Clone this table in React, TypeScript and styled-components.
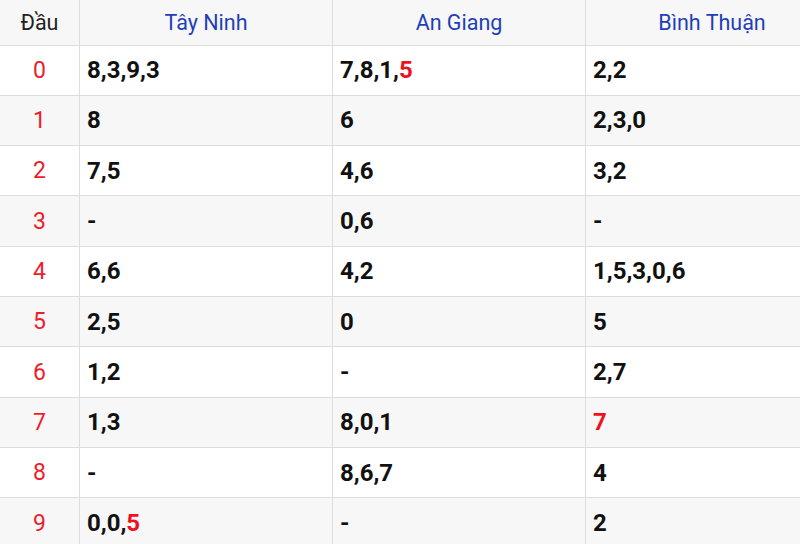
import React from "react";
import styled, { createGlobalStyle } from "styled-components";

const GlobalStyle = createGlobalStyle`
  html, body {
    margin: 0;
    padding: 0;
    background: #fff;
    overflow: hidden;
  }
  body {
    font-family: Roboto, "Noto Sans", Arial, sans-serif;
  }
`;

const Frame = styled.div`
  width: 800px;
  height: 544px;
  overflow: hidden;
`;

const Table = styled.div`
  display: grid;
  grid-template-columns: 80px repeat(3, 253px);
  grid-template-rows: 45.5px repeat(10, 50.33px);
  width: 839px;
`;

const Cell = styled.div<{ $shade?: boolean; $center?: boolean }>`
  box-sizing: border-box;
  display: flex;
  align-items: center;
  justify-content: ${(p) => (p.$center ? "center" : "flex-start")};
  padding: 0 7px;
  border-right: 1px solid #dddddd;
  border-bottom: 1px solid #dddddd;
  background: ${(p) => (p.$shade ? "#f7f7f7" : "#ffffff")};
`;

const HeadLabel = styled.span<{ $blue?: boolean }>`
  color: ${(p) => (p.$blue ? "#1f3fb8" : "#222222")};
  font-size: 21.5px;
  font-weight: 400;
`;

const Head = styled.span`
  color: #ee1d2b;
  font-size: 23px;
  font-weight: 400;
`;

const Nums = styled.span`
  color: #111111;
  font-size: 24px;
  font-weight: 700;
`;

const Hot = styled.span`
  color: #ee1120;
`;

type Val = { text: string; hot?: string };

const provinces = ["Tây Ninh", "An Giang", "Bình Thuận"];

const rows: Val[][] = [
  [{ text: "8,3,9,3" }, { text: "7,8,1,", hot: "5" }, { text: "2,2" }],
  [{ text: "8" }, { text: "6" }, { text: "2,3,0" }],
  [{ text: "7,5" }, { text: "4,6" }, { text: "3,2" }],
  [{ text: "-" }, { text: "0,6" }, { text: "-" }],
  [{ text: "6,6" }, { text: "4,2" }, { text: "1,5,3,0,6" }],
  [{ text: "2,5" }, { text: "0" }, { text: "5" }],
  [{ text: "1,2" }, { text: "-" }, { text: "2,7" }],
  [{ text: "1,3" }, { text: "8,0,1" }, { text: "", hot: "7" }],
  [{ text: "-" }, { text: "8,6,7" }, { text: "4" }],
  [{ text: "0,0,", hot: "5" }, { text: "-" }, { text: "2" }],
];

export default function App() {
  return (
    <Frame>
      <GlobalStyle />
      <Table>
        <Cell $shade $center>
          <HeadLabel>Đầu</HeadLabel>
        </Cell>
        {provinces.map((p) => (
          <Cell key={p} $shade $center>
            <HeadLabel $blue>{p}</HeadLabel>
          </Cell>
        ))}
        {rows.map((row, i) => (
          <React.Fragment key={i}>
            <Cell $shade={i % 2 === 1} $center>
              <Head>{i}</Head>
            </Cell>
            {row.map((v, j) => (
              <Cell key={j} $shade={i % 2 === 1}>
                <Nums>
                  {v.text}
                  {v.hot && <Hot>{v.hot}</Hot>}
                </Nums>
              </Cell>
            ))}
          </React.Fragment>
        ))}
      </Table>
    </Frame>
  );
}
